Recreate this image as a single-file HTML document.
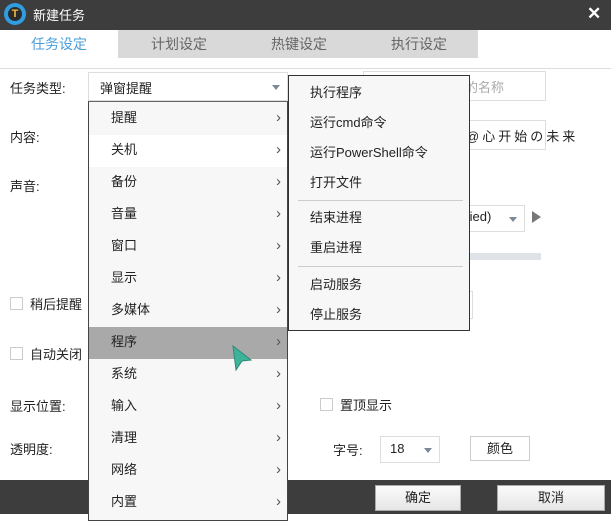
<!DOCTYPE html>
<html><head><meta charset="utf-8"><style>
*{margin:0;padding:0;box-sizing:border-box}
body{width:611px;height:514px;overflow:hidden;background:#fff;font-family:"Liberation Sans","Noto Sans CJK SC",sans-serif;font-size:13px;color:#222;position:relative}
.a{position:absolute}
.t{white-space:nowrap}
.cb{width:13px;height:13px;border:1px solid #ccc;background:#fff}
.arr{width:0;height:0;border-left:4px solid transparent;border-right:4px solid transparent;border-top:5px solid #7a8a99}
.menu div.i{position:absolute;left:0;width:198px;height:32px;line-height:30px;padding-left:22px}
.menu div.i span{position:absolute;right:6px;top:0;color:#555;font-size:15px}
.sub div{position:absolute;left:21px}
</style></head><body>
<div class="a" style="left:0;top:0;width:611px;height:30px;background:#3d3d3d"></div>
<div class="a" style="left:4px;top:3px;width:22px;height:22px;border-radius:50%;background:#2f9de0"></div>
<div class="a" style="left:8px;top:7px;width:14px;height:14px;border-radius:50%;background:#2b2b2b;color:#f5b93c;font-weight:bold;font-size:11px;text-align:center;line-height:14px">T</div>
<div class="a t" style="left:33px;top:5px;color:#fff;font-size:13px">新建任务</div>
<div class="a t" style="left:587px;top:4px;color:#fff;font-size:17px;font-weight:bold">✕</div>
<div class="a" style="left:0;top:30px;width:611px;height:28px;background:#fff"></div>
<div class="a" style="left:118px;top:30px;width:360px;height:28px;background:#d9d9d9"></div>
<div class="a" style="left:0;top:68px;width:611px;height:1px;background:#ddd"></div>
<div class="a t" style="left:31px;top:34px;color:#4a9edb;font-size:14px">任务设定</div>
<div class="a t" style="left:151px;top:34px;color:#666;font-size:14px">计划设定</div>
<div class="a t" style="left:271px;top:34px;color:#666;font-size:14px">热键设定</div>
<div class="a t" style="left:391px;top:34px;color:#666;font-size:14px">执行设定</div>

<div class="a t" style="left:10px;top:78px">任务类型:</div>
<div class="a t" style="left:10px;top:127px">内容:</div>
<div class="a t" style="left:10px;top:176px">声音:</div>
<div class="a cb" style="left:10px;top:297px"></div><div class="a t" style="left:30px;top:294px">稍后提醒</div>
<div class="a cb" style="left:10px;top:347px"></div><div class="a t" style="left:30px;top:344px">自动关闭</div>
<div class="a t" style="left:10px;top:396px">显示位置:</div>
<div class="a t" style="left:10px;top:439px">透明度:</div>

<div class="a" style="left:88px;top:72px;width:200px;height:29px;border:1px solid #ddd;background:#fff"></div>
<div class="a t" style="left:100px;top:78px">弹窗提醒</div>
<div class="a arr" style="left:272px;top:85px"></div>

<div class="a" style="left:363px;top:71px;width:183px;height:30px;border:1px solid #ddd"></div>
<div class="a t" style="left:400px;top:77px;color:#aaa">任务类型中的名称</div>
<div class="a" style="left:363px;top:120px;width:183px;height:30px;border:1px solid #ddd"></div>
<div class="a t" style="left:466px;top:126px;letter-spacing:3px">@心开始の未来</div>
<div class="a" style="left:440px;top:205px;width:85px;height:27px;border:1px solid #ddd"></div>
<div class="a t" style="left:466px;top:209px">fied)</div>
<div class="a arr" style="left:509px;top:217px"></div>
<div class="a" style="left:532px;top:211px;width:0;height:0;border-top:6px solid transparent;border-bottom:6px solid transparent;border-left:9px solid #777"></div>
<div class="a" style="left:440px;top:253px;width:101px;height:7px;background:#dfe3e8"></div>
<div class="a" style="left:440px;top:291px;width:33px;height:28px;border:1px solid #ddd"></div>

<div class="a cb" style="left:320px;top:398px"></div><div class="a t" style="left:340px;top:395px">置顶显示</div>
<div class="a t" style="left:333px;top:440px">字号:</div>
<div class="a" style="left:380px;top:436px;width:60px;height:27px;border:1px solid #ddd"></div>
<div class="a t" style="left:390px;top:441px">18</div>
<div class="a arr" style="left:424px;top:448px"></div>
<div class="a" style="left:470px;top:436px;width:60px;height:25px;border:1px solid #ccc;text-align:center;line-height:23px">颜色</div>

<div class="a" style="left:0;top:480px;width:611px;height:34px;background:#3d3d3d"></div>
<div class="a" style="left:375px;top:485px;width:86px;height:26px;background:linear-gradient(#fafafa,#e6e6e6);border:1px solid #aaa;text-align:center;line-height:24px">确定</div>
<div class="a" style="left:497px;top:485px;width:108px;height:26px;background:linear-gradient(#fafafa,#e6e6e6);border:1px solid #aaa;text-align:center;line-height:24px">取消</div>

<div class="a menu" style="left:88px;top:101px;width:200px;height:420px;background:#f7f7f7;border:1px solid #444;border-top:1px solid #666">
<div class="i" style="top:1px">提醒<span>›</span></div>
<div class="i" style="top:33px;background:#fff">关机<span>›</span></div>
<div class="i" style="top:65px">备份<span>›</span></div>
<div class="i" style="top:97px">音量<span>›</span></div>
<div class="i" style="top:129px">窗口<span>›</span></div>
<div class="i" style="top:161px">显示<span>›</span></div>
<div class="i" style="top:193px">多媒体<span>›</span></div>
<div class="i" style="top:225px;background:#a9a9a9">程序<span>›</span></div>
<div class="i" style="top:257px">系统<span>›</span></div>
<div class="i" style="top:289px">输入<span>›</span></div>
<div class="i" style="top:321px">清理<span>›</span></div>
<div class="i" style="top:353px">网络<span>›</span></div>
<div class="i" style="top:385px">内置<span>›</span></div>
</div>
<svg class="a" style="left:230px;top:344px" width="24" height="28"><path d="M3 2 L21 16 L12 17 L6 26 Z" fill="#3db39a" stroke="#2a8a75" stroke-width="1"/></svg>

<div class="a sub" style="left:288px;top:75px;width:182px;height:256px;background:#f7f7f7;border:1px solid #333">
<div class="t" style="top:6px">执行程序</div>
<div class="t" style="top:36px">运行cmd命令</div>
<div class="t" style="top:66px">运行PowerShell命令</div>
<div class="t" style="top:96px">打开文件</div>
<div style="top:124px;left:9px;width:165px;height:1px;background:#ccc"></div>
<div class="t" style="top:131px">结束进程</div>
<div class="t" style="top:161px">重启进程</div>
<div style="top:190px;left:9px;width:165px;height:1px;background:#ccc"></div>
<div class="t" style="top:198px">启动服务</div>
<div class="t" style="top:228px">停止服务</div>
</div>
</body></html>
